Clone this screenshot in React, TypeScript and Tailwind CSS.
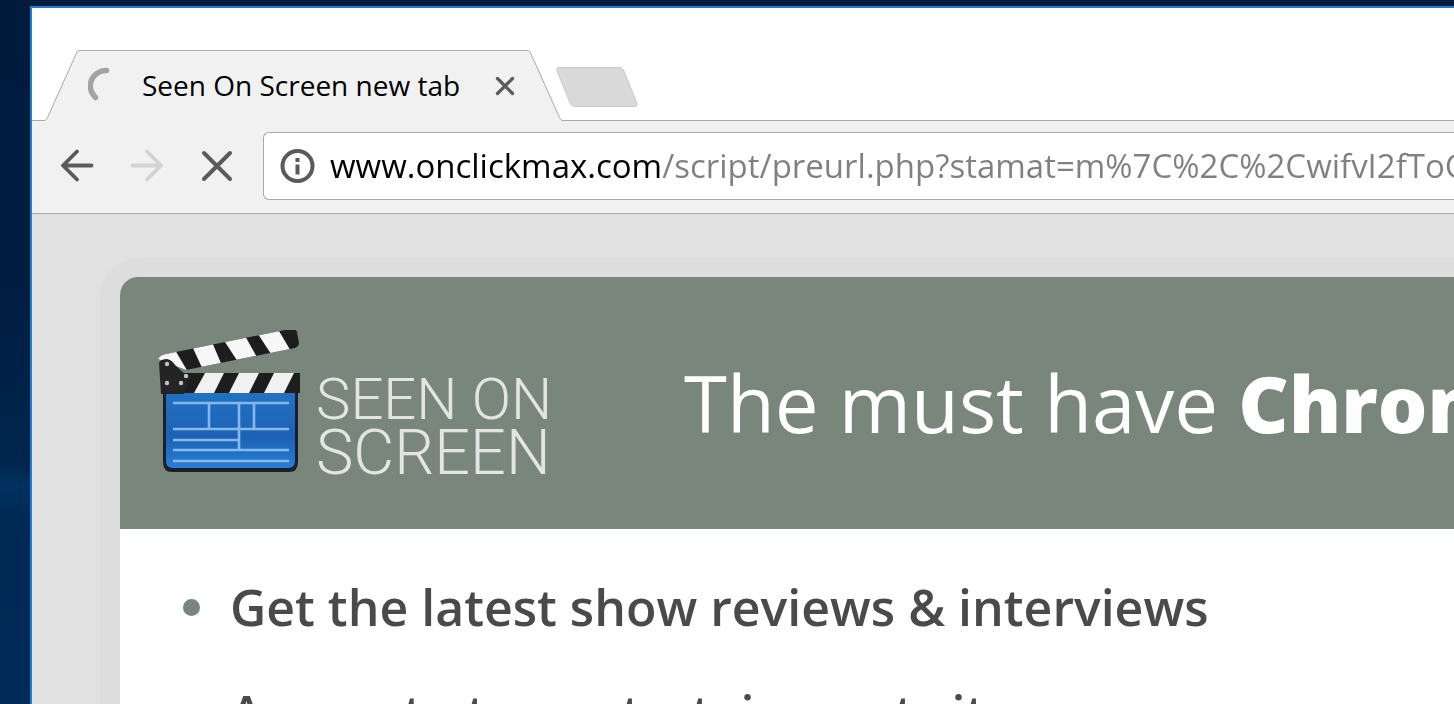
import { useState } from 'react';

const HOST = 'www.onclickmax.com';
const PATH = '/script/preurl.php?stamat=m%7C%2C%2CwifvI2fToCaL7xQ';

const features = [
  'Get the latest show reviews & interviews',
  'Access to top entertainment sites',
];

function Spinner() {
  return (
    <svg width="38" height="38" viewBox="0 0 38 38" fill="none" className="shrink-0">
      <path d="M18.500 3.500 A15.500 15.500 0 0 0 7.500 30.500" stroke="#a3a3a3" strokeWidth="5.500" strokeLinecap="round" />
    </svg>
  );
}

function TabStrip() {
  return (
    <div className="flex h-[113px] items-end">
      <div className="w-3 border-b border-[#a9a9a9]" />
      <svg width="36" height="71" viewBox="0 0 36 71" className="shrink-0">
        <path d="M0 71 V70.5 C2 70.5 2.600 69.500 3.500 67.500 L32.500 3 C33.300 1.200 34 .5 36 .5 V71 Z" fill="#f1f1f1" />
        <path d="M0 70.5 C2 70.5 2.600 69.500 3.500 67.500 L32.500 3 C33.300 1.200 34 .5 36 .5" fill="none" stroke="#a9a9a9" />
      </svg>
      <div className="flex h-[71px] w-[447px] shrink-0 items-center border-t border-[#a9a9a9] bg-[#f1f1f1] pl-2">
        <Spinner />
        <span className="ml-4 flex-1 whitespace-nowrap pb-0.5 text-[28px] leading-9 text-black">
          Seen On Screen new tab
        </span>
        <button type="button" aria-label="Close tab" className="mr-3">
          <svg width="20" height="20" viewBox="0 0 20 20" fill="none" stroke="#5a5a5a" strokeWidth="3.200" strokeLinecap="round">
            <path d="M2.500 2.500 L17.500 17.500 M17.500 2.500 L2.500 17.500" />
          </svg>
        </button>
      </div>
      <svg width="36" height="71" viewBox="0 0 36 71" className="shrink-0">
        <path d="M0 .5 C2 .5 2.800 1.200 3.600 3 L32.500 67.500 C33.500 69.500 34 70.500 36 70.500 V71 H0 Z" fill="#f1f1f1" />
        <path d="M0 .5 C2 .5 2.800 1.200 3.600 3 L32.500 67.500 C33.500 69.500 34 70.500 36 70.500" fill="none" stroke="#a9a9a9" />
      </svg>
      <div className="flex h-[71px] flex-1 items-start border-b border-[#a9a9a9] pt-[17px]">
        <button
          type="button"
          aria-label="New tab"
          className="h-10 w-[68px] -skew-x-[-22deg] rounded-[4px] border border-[#cbcbcb] bg-[#d9d9d9]"
        />
      </div>
    </div>
  );
}

function Toolbar() {
  const [url, setUrl] = useState(HOST + PATH);

  return (
    <div className="flex h-[93px] items-start border-b border-[#a9a9a9] bg-[#f1f1f1] pt-[11px]">
      <div className="flex h-[68px] shrink-0 items-center gap-9 pl-7">
        <button type="button" aria-label="Back">
          <svg width="34" height="34" viewBox="0 0 34 34" fill="none" stroke="#5a5a5a" strokeWidth="3.800" strokeLinecap="round" strokeLinejoin="round">
            <path d="M31.500 16.500 H3 M17 2.500 L3 16.500 L17 30.500" />
          </svg>
        </button>
        <button type="button" aria-label="Forward" disabled>
          <svg width="34" height="34" viewBox="0 0 34 34" fill="none" stroke="#d3d3d3" strokeWidth="3.800" strokeLinecap="round" strokeLinejoin="round">
            <path d="M2.500 16.500 H31 M17 2.500 L31 16.500 L17 30.500" />
          </svg>
        </button>
        <button type="button" aria-label="Stop loading">
          <svg width="34" height="34" viewBox="0 0 34 34" fill="none" stroke="#5a5a5a" strokeWidth="4" strokeLinecap="round">
            <path d="M4 4 L30 30 M30 4 L4 30" />
          </svg>
        </button>
      </div>
      <div className="ml-[29px] flex h-[68px] min-w-0 flex-1 items-center rounded-l-md border border-r-0 border-[#a9a9a9] bg-white pl-4">
        <button type="button" aria-label="View site information" className="shrink-0">
          <svg width="36" height="36" viewBox="0 0 36 36" fill="none">
            <circle cx="17.500" cy="18" r="15" stroke="#5a5a5a" strokeWidth="4" />
            <path d="M15.500 10 h4 v4 h-4 Z M15.500 16.500 h4 v10 h-4 Z" fill="#5a5a5a" />
          </svg>
        </button>
        {/* host is black, the rest of the address is gray */}
        <input
          type="text"
          aria-label="Address"
          value={url}
          onChange={(e) => setUrl(e.target.value)}
          className="ml-3.5 h-12 min-w-0 flex-1 bg-[linear-gradient(to_right,#000_332px,#808080_332px)] bg-clip-text text-[33px] leading-[48px] text-transparent outline-none"
        />
      </div>
    </div>
  );
}

function Clapper() {
  return (
    <svg width="144" height="146" viewBox="0 0 144 146" className="shrink-0">
      <defs>
        <linearGradient id="board" x1="0" y1="0" x2="0" y2="1">
          <stop offset="0" stopColor="#2371c4" />
          <stop offset="0.6" stopColor="#1c62b4" />
          <stop offset="1" stopColor="#2880d6" />
        </linearGradient>
        <clipPath id="arm">
          <path d="M0 29 Q2 25 8 24 L132 -1 Q138 -2 139 2 L141 13 Q141 16 137 18 L28 40 Z" />
        </clipPath>
      </defs>
      <path d="M5 58 H140 V132 Q140 142 131 142 H14 Q5 142 5 132 Z" fill="#17202b" />
      <path d="M8 62 H137 V131 Q137 138 130 138 H15 Q8 138 8 131 Z" fill="url(#board)" />
      <path
        d="M15 73 H131 M15 99 H131 M15 110 H81 M15 120 H131 M15 131 H131 M51 73 V99 M81 73 V120 M96 73 V99"
        fill="none"
        stroke="#86b9ea"
        strokeWidth="2.600"
      />
      <g clipPath="url(#arm)">
        <rect y="-4" width="144" height="50" fill="#1d1d1d" />
        <path d="M0 22 L17 20 L30 42 L18 42 L8 30 L0 30 Z M34 16 L54 12 L65 38 L46 42 Z M65 9 L86 4 L101 31 L82 35 Z M98 1 L118 -4 L134 23 L115 27 Z" fill="#f7f7f7" />
      </g>
      <path d="M3 43 H142 V63 H3 Z" fill="#1d1d1d" />
      <path d="M47 43 H66 L56 63 H36 Z M81 43 H101 L91 63 H71 Z M116 43 H136 L126 63 H106 Z" fill="#f1f1f1" />
      <path d="M1 33 Q3 29 9 29 Q14 30 17 35 L29 46 L33 46 L26 64 H3 Z" fill="#242424" />
      <g fill="#c4c4c4">
        <circle cx="9" cy="34" r="2.200" />
        <circle cx="9" cy="53" r="2.200" />
        <circle cx="23" cy="53" r="2.200" />
        <circle cx="28" cy="46" r="2.200" />
      </g>
    </svg>
  );
}

function Promo() {
  return (
    <div className="ml-[68px] mt-11 rounded-tl-[38px] bg-[#dddddd] pl-5 pt-[19px]">
      <main className="overflow-hidden rounded-tl-[18px] bg-white">
        <header className="flex h-[252px] items-center overflow-hidden bg-[#78867b] pl-[38px]">
          <Clapper />
          <div className="ml-3.5 w-[240px] shrink-0 whitespace-nowrap pt-12 font-['Roboto',sans-serif] font-[350] text-[#e3e5e2]">
            <div className="text-[58px] leading-[52px]">SEEN ON</div>
            <div className="text-[63px] leading-[56px]">SCREEN</div>
          </div>
          <h1 className="ml-32 whitespace-nowrap text-[78px] leading-[106px] text-white">
            The must have <b className="font-extrabold">Chrome</b>
          </h1>
        </header>
        <ul className="flex flex-col gap-[38px] pb-10 pl-[63px] pt-11">
          {features.map((text) => (
            <li key={text} className="flex items-center whitespace-nowrap text-[50px] font-semibold leading-[68px] text-[#4a4a4a]">
              <span className="mr-[30px] size-[17px] shrink-0 rounded-full bg-[#78867b]" />
              {text}
            </li>
          ))}
        </ul>
      </main>
    </div>
  );
}

export default function App() {
  return (
    <div className="h-screen overflow-hidden bg-[linear-gradient(to_bottom,#001b3c_0%,#001d40_40%,#00264e_66%,#003160_69%,#002a54_73%,#002b56_100%)] pl-[30px] pt-1.5 font-['Open_Sans','Noto_Sans',sans-serif]">
      <div className="min-h-screen border-l-2 border-t-2 border-[#1f7fd0] bg-[#e1e1e1]">
        <div className="bg-white">
          <TabStrip />
        </div>
        <Toolbar />
        <Promo />
      </div>
    </div>
  );
}
